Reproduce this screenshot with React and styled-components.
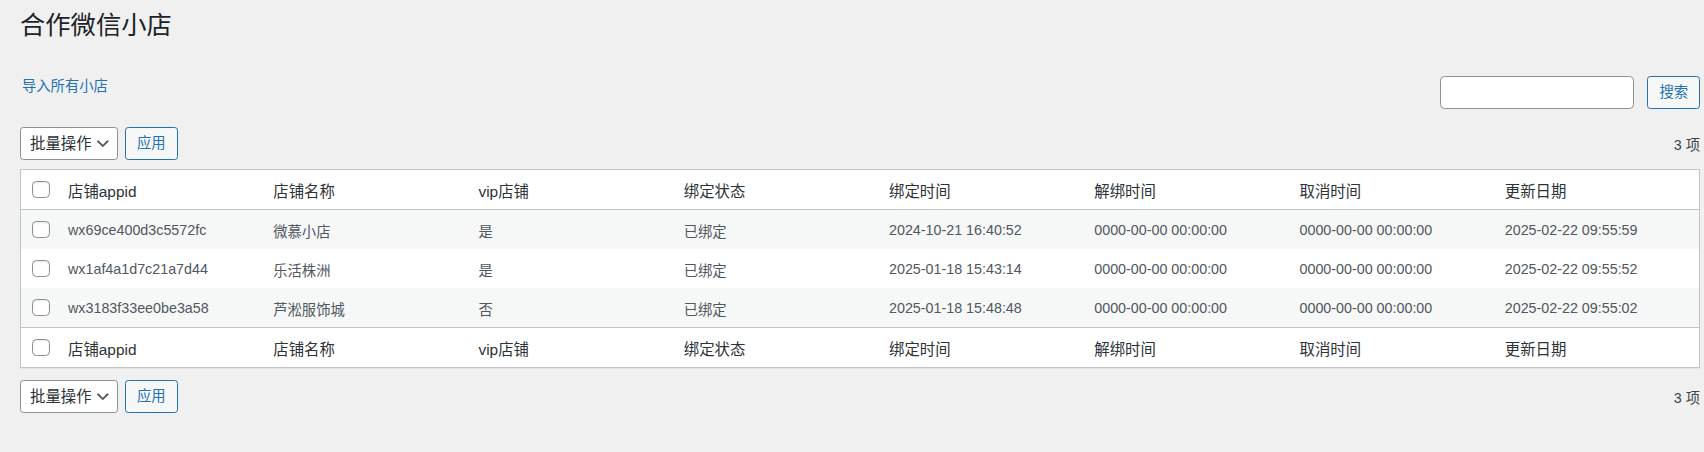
import React from 'react';
import styled, { createGlobalStyle } from 'styled-components';

const columns = ['店铺appid', '店铺名称', 'vip店铺', '绑定状态', '绑定时间', '解绑时间', '取消时间', '更新日期'];

const shops = [
    ['wx69ce400d3c5572fc', '微慕小店', '是', '已绑定', '2024-10-21 16:40:52', '0000-00-00 00:00:00', '0000-00-00 00:00:00', '2025-02-22 09:55:59'],
    ['wx1af4a1d7c21a7d44', '乐活株洲', '是', '已绑定', '2025-01-18 15:43:14', '0000-00-00 00:00:00', '0000-00-00 00:00:00', '2025-02-22 09:55:52'],
    ['wx3183f33ee0be3a58', '芦淞服饰城', '否', '已绑定', '2025-01-18 15:48:48', '0000-00-00 00:00:00', '0000-00-00 00:00:00', '2025-02-22 09:55:02'],
];

const Chevron = () => (
    <ChevronIcon viewBox="0 0 20 20" aria-hidden="true">
        <path d="M5 6l5 5 5-5 2 1-7 7-7-7 2-1z" fill="#50575e" />
    </ChevronIcon>
);

const TableNav = ({ top }) => (
    <Nav top={top}>
        <Actions>
            <SelectWrap>
                <BulkSelect defaultValue="-1">
                    <option value="-1">批量操作</option>
                </BulkSelect>
                <Chevron />
            </SelectWrap>
            <Button>应用</Button>
        </Actions>
        <Count>3 项</Count>
    </Nav>
);

const HeaderRow = ({ foot }) => (
    <tr>
        <HeadCheck foot={foot}><Checkbox type="checkbox" /></HeadCheck>
        {columns.map((c) => (
            <HeadCell key={c} foot={foot}>{c}</HeadCell>
        ))}
    </tr>
);

const App = () => {
    return (
        <>
            <GlobalStyle />
            <Wrap>
                <Title>合作微信小店</Title>
                <TopBar>
                    <SubLink href="#">导入所有小店</SubLink>
                    <SearchBox>
                        <SearchInput type="search" />
                        <Button>搜索</Button>
                    </SearchBox>
                </TopBar>
                <TableNav top={18} />
                <Table>
                    <colgroup>
                        <col style={{ width: 36 }} />
                        {columns.map((c) => <col key={c} />)}
                    </colgroup>
                    <thead>
                        <HeaderRow />
                    </thead>
                    <tbody>
                        {shops.map((row, i) => (
                            <Row key={row[0]} striped={i % 2 === 0}>
                                <CheckCell><Checkbox type="checkbox" /></CheckCell>
                                {row.map((v, j) => (
                                    <Cell key={j}>{v}</Cell>
                                ))}
                            </Row>
                        ))}
                    </tbody>
                    <tfoot>
                        <HeaderRow foot />
                    </tfoot>
                </Table>
                <TableNav top={12} />
            </Wrap>
        </>
    );
};

const GlobalStyle = createGlobalStyle`
    body {
        margin: 0;
        background: #f0f0f1;
        color: #3c434a;
        font-family: "Liberation Sans", "Noto Sans CJK SC", sans-serif;
    }
    * {
        box-sizing: border-box;
    }
`;

const Wrap = styled.div`
    padding: 0 4px 0 20px;
`;

const Title = styled.h1`
    margin: 0;
    padding: 9px 0 4px;
    font-size: 25.3px;
    line-height: 33px;
    font-weight: 400;
    color: #1d2327;
`;

const TopBar = styled.div`
    display: flex;
    justify-content: space-between;
    align-items: flex-start;
    margin-top: 30px;
`;

const SubLink = styled.a`
    padding-left: 2px;
    font-size: 14.3px;
    line-height: 21px;
    color: #2271b1;
    text-decoration: none;
`;

const SearchBox = styled.div`
    display: flex;
    gap: 13px;
`;

const SearchInput = styled.input`
    width: 194px;
    height: 33px;
    margin: 0;
    padding: 0 9px;
    background: #fff;
    border: 1px solid #8c8f94;
    border-radius: 4.4px;
    font-size: 15.4px;
    outline: none;
`;

const Button = styled.button`
    height: 33px;
    margin: 0;
    padding: 0 11px;
    background: #f6f7f7;
    border: 1px solid #2271b1;
    border-radius: 3.3px;
    color: #2271b1;
    font-family: inherit;
    font-size: 14.3px;
    line-height: 31px;
    cursor: pointer;
`;

const Nav = styled.div`
    display: flex;
    justify-content: space-between;
    align-items: center;
    margin-top: ${(p) => p.top}px;
`;

const Actions = styled.div`
    display: flex;
    gap: 7px;
`;

const SelectWrap = styled.div`
    position: relative;
`;

const BulkSelect = styled.select`
    appearance: none;
    width: 98px;
    height: 33px;
    margin: 0;
    padding: 0 26px 0 9px;
    background: #fff;
    border: 1px solid #8c8f94;
    border-radius: 3.3px;
    color: #2c3338;
    font-family: inherit;
    font-size: 15.4px;
    line-height: 31px;
`;

const ChevronIcon = styled.svg`
    position: absolute;
    right: 6px;
    top: 8px;
    width: 17.6px;
    height: 17.6px;
    pointer-events: none;
`;

const Count = styled.span`
    font-size: 14.3px;
    color: #3c434a;
`;

const Table = styled.table`
    width: 100%;
    margin-top: 9px;
    table-layout: fixed;
    border-collapse: separate;
    border-spacing: 0;
    background: #fff;
    border: 1px solid #c3c4c7;
    box-shadow: 0 1px 1px rgba(0, 0, 0, 0.04);
`;

const HeadCell = styled.th`
    height: 40px;
    padding: 1px 11px 0;
    text-align: left;
    font-size: 15.4px;
    font-weight: 400;
    color: #2c3338;
    vertical-align: middle;
    border-bottom: ${(p) => (p.foot ? 'none' : '1px solid #c3c4c7')};
    border-top: ${(p) => (p.foot ? '1px solid #c3c4c7' : 'none')};
`;

const HeadCheck = styled(HeadCell)`
    padding: 0 0 0 11px;
`;

const Row = styled.tr`
    background: ${(p) => (p.striped ? '#f6f7f7' : '#fff')};
`;

const Cell = styled.td`
    height: 39px;
    padding: 1px 11px 0;
    font-size: 14.3px;
    color: #50575e;
    vertical-align: middle;
    white-space: nowrap;
`;

const CheckCell = styled(Cell)`
    padding: 0 0 0 11px;
`;

const Checkbox = styled.input`
    appearance: none;
    display: block;
    width: 17.6px;
    height: 17.6px;
    margin: 0;
    background: #fff;
    border: 1px solid #8c8f94;
    border-radius: 4.4px;
    box-shadow: inset 0 1px 2px rgba(0, 0, 0, 0.1);
`;

export default App;
